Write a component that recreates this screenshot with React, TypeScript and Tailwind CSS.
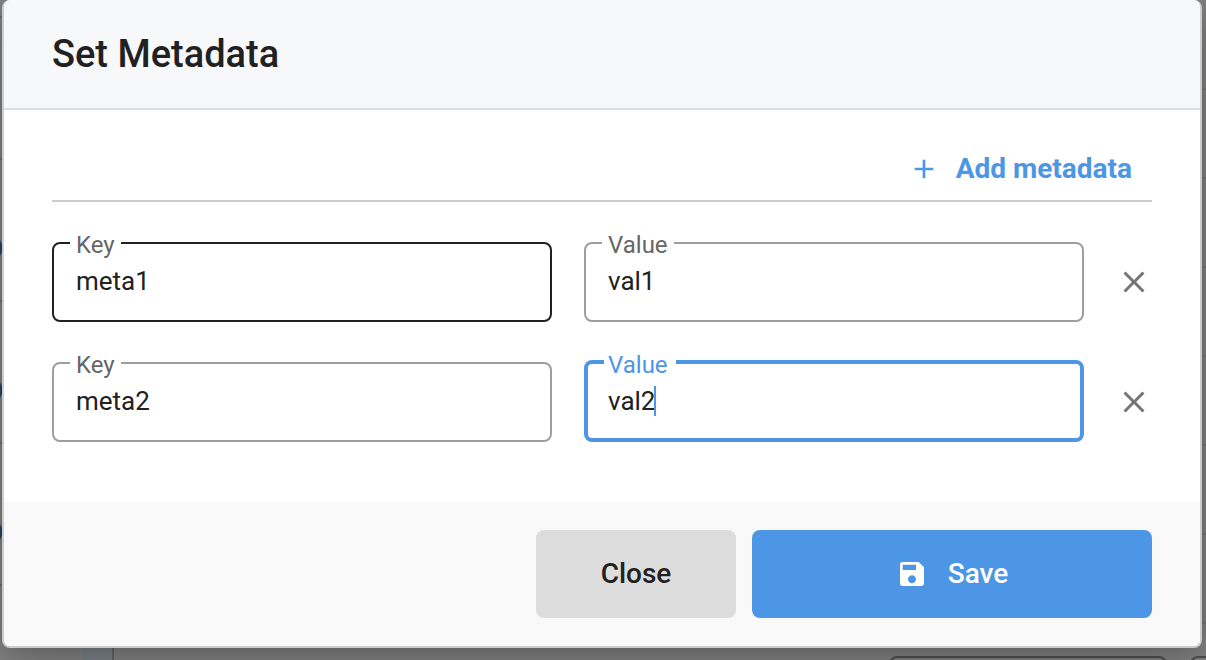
import { useState } from "react"
import { MdAdd, MdClose, MdSave } from "react-icons/md"

type Metadata = { key: string; value: string }

type FieldProps = {
  id: string
  label: string
  value: string
  onChange: (value: string) => void
  state?: "idle" | "hovered" | "focused"
}

const borders = {
  idle: "h-20 border-2 border-[#9e9e9e] px-[22px] pb-0.5",
  hovered: "h-20 border-2 border-[#212121] px-[22px] pb-0.5",
  focused: "-mt-0.5 h-[82px] border-4 border-[#4d96e6] px-5",
}

const labels = {
  idle: "left-[18px] px-1.5 text-[#666666]",
  hovered: "left-[18px] px-1.5 text-[#666666]",
  focused: "left-5 pr-2 pl-1 text-[#4d96e6]",
}

const Field = ({ id, label, value, onChange, state = "idle" }: FieldProps) => {
  return (
    <div className="relative min-w-0 flex-1">
      <input
        id={id}
        value={value}
        onChange={(e) => onChange(e.target.value)}
        className={`block w-full rounded-lg bg-white text-[26px] text-[#212121] caret-transparent outline-none ${borders[state]}`}
      />
      <label htmlFor={id} className={`absolute -top-[11px] bg-white text-2xl leading-7 ${labels[state]}`}>
        {label}
      </label>
      {state === "focused" && <span className="absolute top-6 left-[70px] h-[30px] w-0.5 bg-[#4d96e6]" />}
    </div>
  )
}

const Backdrop = () => {
  return (
    <div className="absolute inset-0 flex justify-between overflow-hidden bg-[#848484]" aria-hidden="true">
      <div className="flex w-[114px] border-r-2 border-[#666666]">
        <div className="flex-1 pt-4">
          {[0, 1, 2, 3].map((row) => (
            <div key={row} className="flex h-[142px] items-center border-t-2 border-[#6e6e6e] pt-9">
              {row > 0 && <span className="-ml-2.5 h-[18px] w-3 rounded-full border-2 border-[#2c4360]" />}
            </div>
          ))}
          <div className="h-20 border-t-2 border-[#6e6e6e]" />
        </div>
        <div className="w-[30px] bg-[#7b8488]" />
      </div>
      <div className="w-4 pt-px">
        {[0, 1, 2, 3, 4, 5, 6].map((row) => (
          <div key={row} className="h-[89px] border-b-2 border-[#777777]" />
        ))}
      </div>
      <div className="absolute top-[656px] right-[39px] h-20 w-[278px] rounded-lg border-2 border-[#505050]" />
      <div className="absolute top-[656px] -right-20 h-20 w-24 rounded-lg border-2 border-[#505050]" />
    </div>
  )
}

export default function App() {
  const [items, setItems] = useState<Metadata[]>([
    { key: "meta1", value: "val1" },
    { key: "meta2", value: "val2" },
  ])

  const update = (index: number, patch: Partial<Metadata>) =>
    setItems(items.map((item, i) => (i === index ? { ...item, ...patch } : item)))

  return (
    <div className="relative min-h-screen overflow-hidden pr-1 pl-0.5 font-['Roboto',sans-serif] text-[#212121]">
      <Backdrop />
      <div
        role="dialog"
        aria-labelledby="title"
        className="relative overflow-hidden rounded-lg border-x-2 border-b-2 border-[#cccccc] bg-white shadow-[0_8px_40px_rgba(0,0,0,0.35)]"
      >
        <header className="border-b-2 border-[#dddddd] bg-[#f7f8fa] px-12 py-[30px]">
          <h1 id="title" className="pt-px text-[38px] leading-[47px] font-medium">
            Set Metadata
          </h1>
        </header>

        <main className="px-12 pb-[60px]">
          <div className="flex justify-end border-b-2 border-[#cccccc] pt-9 pb-2">
            <button
              type="button"
              onClick={() => setItems([...items, { key: "", value: "" }])}
              className="flex items-center gap-4 px-5 py-1 text-[28px] leading-[38px] font-bold text-[#4d96e6]"
            >
              <MdAdd size={32} />
              Add metadata
            </button>
          </div>
          <div className="flex flex-col gap-10 pt-10">
            {items.map((item, i) => (
              <div key={i} className="flex items-center gap-8">
                <Field
                  id={`key-${i}`}
                  label="Key"
                  value={item.key}
                  onChange={(key) => update(i, { key })}
                  state={i === 0 ? "hovered" : "idle"}
                />
                <Field
                  id={`value-${i}`}
                  label="Value"
                  value={item.value}
                  onChange={(value) => update(i, { value })}
                  state={i === 1 ? "focused" : "idle"}
                />
                <button
                  type="button"
                  aria-label="Remove"
                  onClick={() => setItems(items.filter((_, n) => n !== i))}
                  className="text-[#757575]"
                >
                  <MdClose size={36} />
                </button>
              </div>
            ))}
          </div>
        </main>

        <footer className="flex justify-end gap-4 bg-[#f9f9f9] px-12 py-7 text-[28px] font-medium">
          <button type="button" className="h-[88px] w-[200px] rounded-lg bg-[#dddddd]">
            Close
          </button>
          <button
            type="button"
            className="flex h-[88px] w-[400px] items-center justify-center gap-5 rounded-lg bg-[#4d96e6] text-white"
          >
            <MdSave size={32} />
            Save
          </button>
        </footer>
      </div>
    </div>
  )
}
